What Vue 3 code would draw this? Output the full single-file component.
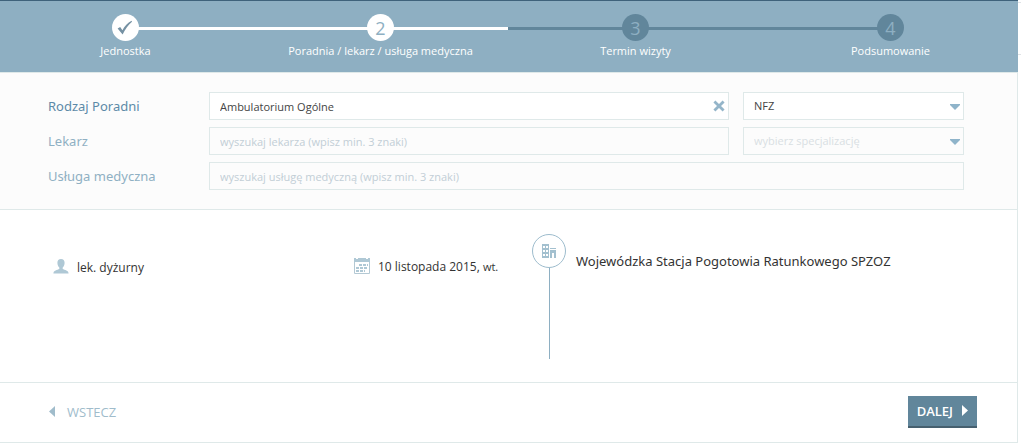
<script setup>
import { ref } from 'vue'

const steps = [
  { number: 1, label: 'Jednostka', state: 'done' },
  { number: 2, label: 'Poradnia / lekarz / usługa medyczna', state: 'current' },
  { number: 3, label: 'Termin wizyty', state: 'todo' },
  { number: 4, label: 'Podsumowanie', state: 'todo' }
]

const clinic = ref('Ambulatorium Ogólne')
const doctor = ref('')
const service = ref('')
const payer = ref('NFZ')
const specialization = ref('')
</script>

<template>
  <div class="page">
    <main class="panel">
      <ol class="steps">
        <li v-for="step in steps" :key="step.number" class="step" :class="step.state">
          <span class="bullet">
            <svg v-if="step.state === 'done'" width="27" height="27" viewBox="0 0 27 27" aria-hidden="true">
              <path d="M5.6 14.6 L8.2 13.1 L10.4 16.2 C12.6 12.2 15.6 9 19.6 6.8 L20 7.8 C16.4 11 13.2 15.2 10.6 20.6 Z" fill="#7591a3" />
            </svg>
            <template v-else>{{ step.number }}</template>
          </span>
          <span class="caption">{{ step.label }}</span>
        </li>
      </ol>

      <form class="filters" @submit.prevent>
        <label class="name active" for="clinic">Rodzaj Poradni</label>
        <div class="field">
          <input id="clinic" v-model="clinic" class="control filled" type="text">
          <button class="clear" type="button" aria-label="Wyczyść" @click="clinic = ''">
            <svg width="12" height="12" viewBox="0 0 12 12" aria-hidden="true">
              <path d="M2.4 2.4 L9.6 9.6 M9.6 2.4 L2.4 9.6" stroke="#94b5c9" stroke-width="2.8" stroke-linecap="square" />
            </svg>
          </button>
        </div>
        <div class="field">
          <select v-model="payer" class="control filled" aria-label="Płatnik">
            <option>NFZ</option>
          </select>
          <svg class="arrow" width="10" height="6" viewBox="0 0 10 6" aria-hidden="true"><path d="M0 0H10V1L5 6L0 1Z" fill="#8fb4ca" /></svg>
        </div>

        <label class="name" for="doctor">Lekarz</label>
        <div class="field">
          <input id="doctor" v-model="doctor" class="control" type="text" placeholder="wyszukaj lekarza (wpisz min. 3 znaki)">
        </div>
        <div class="field">
          <select v-model="specialization" class="control empty" aria-label="Specjalizacja">
            <option value="">wybierz specjalizację</option>
          </select>
          <svg class="arrow" width="10" height="6" viewBox="0 0 10 6" aria-hidden="true"><path d="M0 0H10V1L5 6L0 1Z" fill="#8fb4ca" /></svg>
        </div>

        <label class="name" for="service">Usługa medyczna</label>
        <div class="field wide">
          <input id="service" v-model="service" class="control" type="text" placeholder="wyszukaj usługę medyczną (wpisz min. 3 znaki)">
        </div>
      </form>

      <section class="visit">
        <div class="detail">
          <svg width="16" height="16" viewBox="0 0 16 16" aria-hidden="true">
            <path d="M8 0C10.4 0 11.6 1.5 11.6 3.7C11.6 5.9 10.8 7.5 9.7 8.5V10.1C11.6 11.1 15.6 11.5 15.6 14.5H0.4C0.4 11.5 4.4 11.1 6.3 10.1V8.5C5.2 7.5 4.4 5.9 4.4 3.7C4.4 1.5 5.6 0 8 0Z" fill="#afc8d5" />
          </svg>
          <span>lek. dyżurny</span>
        </div>
        <div class="detail date">
          <svg width="16" height="16" viewBox="0 0 16 16" aria-hidden="true">
            <path d="M0.5 1V15.5H15.5V1" fill="none" stroke="#b4c9d4" />
            <path d="M0 0H2V1H4V0H12V1H14V0H16V4H0Z" fill="#afc8d5" />
            <path d="M5 7H14M2 10H14M2 13H11" stroke="#afc8d5" stroke-width="2" stroke-dasharray="3 1" />
          </svg>
          <span>10 listopada 2015, <small>wt.</small></span>
        </div>
        <div class="place">
          <div class="marker">
            <span class="ring">
              <svg width="15" height="15" viewBox="0 0 15 15" aria-hidden="true">
                <path fill-rule="evenodd" d="M0 0H7V14H0ZM1 2V4H3V2ZM4 2V4H6V2ZM1 6V8H3V6ZM4 6V8H6V6ZM1 10V12H3V10ZM4 10V12H6V10Z" fill="#a3c0cf" />
                <path d="M8 4H14V5H8ZM8 6H14V14H12V9H10V14H8Z" fill="#a3c0cf" />
              </svg>
            </span>
            <span class="stem"></span>
          </div>
          <span class="place-name">Wojewódzka Stacja Pogotowia Ratunkowego SPZOZ</span>
        </div>
      </section>

      <footer class="actions">
        <button class="back" type="button">
          <svg width="6" height="11" viewBox="0 0 6 11" aria-hidden="true"><path d="M6 0V11L0 5.5Z" fill="#a0bccb" /></svg>
          WSTECZ
        </button>
        <button class="next" type="button">
          DALEJ
          <svg width="6" height="11" viewBox="0 0 6 11" aria-hidden="true"><path d="M0 0V11L6 5.5Z" fill="#ffffff" /></svg>
        </button>
      </footer>
    </main>
    <aside class="edge"></aside>
  </div>
</template>

<style>
body {
  margin: 0;
  background: #ffffff;
}
</style>

<style scoped>
.page {
  display: flex;
  align-items: flex-start;
  font-family: "Open Sans", "Noto Sans", sans-serif;
  font-size: 12px;
  color: #333333;
}

.page * {
  box-sizing: border-box;
}

.panel {
  flex: 1;
  min-width: 0;
}

.edge {
  width: 3px;
  height: 53px;
  margin-top: 2px;
  border: solid #dfe3e6;
  border-width: 1px 0;
}

.steps {
  display: flex;
  margin: 0;
  padding: 13px 0 0;
  height: 72px;
  list-style: none;
  background: #8eafc2;
  border-top: 1px solid #3f627b;
  overflow: hidden;
}

.step {
  position: relative;
  flex: 1;
  display: flex;
  flex-direction: column;
  align-items: center;
  gap: 2px;
}

.step:first-child {
  margin-left: -2px;
}

.step::before,
.step::after {
  content: "";
  position: absolute;
  top: 13px;
  width: 50%;
  height: 3px;
  background: #61869b;
}

.step::before {
  left: 0;
}

.step::after {
  right: 0;
}

.done::after,
.current::before,
.current::after {
  background: #ffffff;
}

.step:first-child::before,
.step:last-child::after {
  display: none;
}

.bullet {
  position: relative;
  z-index: 1;
  width: 27px;
  height: 27px;
  border-radius: 50%;
  background: #ffffff;
  color: #8eafc2;
  font-size: 18px;
  line-height: 28px;
  text-align: center;
}

.bullet svg {
  display: block;
}

.todo .bullet {
  background: #61869b;
  color: #8eafc2;
}

.caption {
  font-size: 11px;
  line-height: 16px;
  color: #ffffff;
  white-space: nowrap;
}

.filters {
  display: grid;
  grid-template-columns: 147px 1fr 221px;
  gap: 7px 14px;
  padding: 19px 53px 19px 48px;
  background: #fcfcfc;
  border: solid #dfe9e9;
  border-width: 1px 1px 1px 0;
}

.name {
  font-family: "Noto Sans", "Open Sans", sans-serif;
  font-size: 13px;
  line-height: 29px;
  height: 28px;
  color: #8fb0c3;
  white-space: nowrap;
}

.name.active {
  color: #5c8aa8;
}

.field {
  position: relative;
  height: 28px;
}

.wide {
  grid-column: span 2;
}

.control {
  display: block;
  width: 100%;
  height: 28px;
  margin: 0;
  padding: 0 10px;
  border: 1px solid #dfe9e9;
  border-radius: 0;
  background: transparent;
  color: #444444;
  font-family: inherit;
  font-size: 11px;
  line-height: 26px;
  appearance: none;
  outline: none;
}

.control.filled {
  background: #ffffff;
}

.control.empty {
  color: #d9dfe3;
}

.control::placeholder {
  color: #c2ced6;
  opacity: 1;
}

.clear {
  position: absolute;
  top: 8px;
  right: 4px;
  padding: 0;
  border: 0;
  background: none;
  line-height: 0;
  cursor: pointer;
}

.arrow {
  position: absolute;
  top: 12px;
  right: 4px;
  pointer-events: none;
}

.visit {
  display: grid;
  grid-template-columns: 301fr 178fr 485fr;
  padding: 24px 0 23px 53px;
  border-right: 1px solid #dfe9e9;
}

.detail {
  display: flex;
  align-items: center;
  gap: 8px;
  height: 66px;
  white-space: nowrap;
}

.date {
  height: 64px;
}

.date small {
  font-size: 11px;
}

.place {
  display: flex;
  gap: 10px;
}

.marker {
  display: flex;
  flex-direction: column;
  align-items: center;
  width: 34px;
}

.ring {
  display: flex;
  align-items: center;
  justify-content: center;
  width: 34px;
  height: 34px;
  border: 1px solid #9dbccd;
  border-radius: 50%;
}

.stem {
  width: 1px;
  height: 91px;
  background: #8eafc2;
}

.place-name {
  font-family: "Noto Sans", "Open Sans", sans-serif;
  font-size: 13px;
  line-height: 54px;
  white-space: nowrap;
}

.actions {
  display: flex;
  align-items: center;
  justify-content: space-between;
  height: 61px;
  padding: 0 40px 2px 49px;
  border: solid #dfe9e9;
  border-width: 1px 1px 1px 0;
}

.back,
.next {
  display: flex;
  align-items: center;
  border: 0;
  background: none;
  font-family: inherit;
  font-size: 13px;
  font-weight: 500;
  cursor: pointer;
}

.back {
  gap: 12px;
  padding: 0;
  color: #a0bccb;
}

.next {
  gap: 9px;
  height: 32px;
  padding: 0 9px;
  background: #61869b;
  border-bottom: 2px solid #46606f;
  color: #ffffff;
  font-weight: 600;
}
</style>
